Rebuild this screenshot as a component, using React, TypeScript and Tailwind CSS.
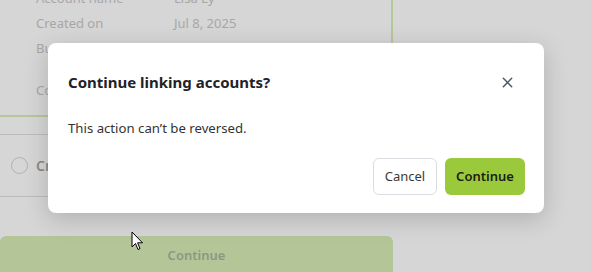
import React from 'react';

const rows = [
  { label: 'Account name', value: 'Lisa Ly' },
  { label: 'Created on', value: 'Jul 8, 2025' },
  { label: 'Business type', value: 'Sole proprietor' },
];

export default function App() {
  return (
    <div className="relative w-[591px] h-[272px] overflow-hidden bg-white font-['Noto_Sans',sans-serif]">
      {/* Page behind the dialog */}
      <div className="w-[393px]">
        <div className="-mt-[22px] -ml-4 border-2 border-[#dbedb7] rounded-b-lg pl-[50px] pt-[6px] pb-[12px]">
          {rows.map((r) => (
            <div key={r.label} className="flex h-[25px] items-center text-[13px] text-[#c8c8c8]">
              <span className="w-[138px]">{r.label}</span>
              <span>{r.value}</span>
            </div>
          ))}
          <div className="flex mt-[17px] h-[25px] items-center text-[13px] text-[#c8c8c8]">
            <span className="w-[138px]">Contact</span>
            <span>lisa@example.com</span>
          </div>
        </div>
        <div className="mt-[17px] border-y border-[#e0e0e0] h-[63px] flex items-center gap-2 pl-[11px]">
          <span className="w-[17px] h-[17px] rounded-full border border-[#d4d4d4]" />
          <span className="text-[14px] font-semibold text-[#a6a6a6]">Create a new account</span>
        </div>
        <div className="mt-[39px] h-[40px] rounded-md bg-[#d7ecb6] flex items-center justify-center text-[13px] font-semibold text-[#a4b79a]">
          Continue
        </div>
      </div>

      {/* Overlay */}
      <div className="absolute inset-0 bg-black/[0.16]" />

      {/* Mouse cursor */}
      <svg className="absolute left-[131px] top-[231px]" width="13" height="20" viewBox="0 0 13 20">
        <path d="M1 1 L1 16 L4.5 12.5 L7 18.5 L9 17.6 L6.6 11.8 L11.5 11.8 Z" fill="white" stroke="black" strokeWidth="1" strokeLinejoin="round" />
      </svg>

      {/* Dialog */}
      <div className="absolute left-[48px] top-[43px] w-[496px] h-[170px] rounded-lg bg-white shadow-[0_6px_24px_rgba(0,0,0,0.18)] pl-5 pr-[19px] pt-[28px] flex flex-col">
        <div className="flex items-center justify-between">
          <h2 className="text-[15px] font-bold text-[#1f2328] leading-[22px]">Continue linking accounts?</h2>
          <button className="mr-[11px] text-[#4b5563]">
            <svg width="13" height="13" viewBox="0 0 14 14" fill="none" stroke="currentColor" strokeWidth="1.6" strokeLinecap="round">
              <path d="M2.5 2.5 L11.5 11.5 M11.5 2.5 L2.5 11.5" />
            </svg>
          </button>
        </div>
        <p className="mt-[26px] text-[13.2px] text-[#333]">This action can’t be reversed.</p>
        <div className="mt-auto mb-[18px] flex justify-end gap-2">
          <button className="h-[37px] w-[64px] rounded-md border border-[#d9dce1] bg-white text-[13px] text-[#3a3a3a]">
            Cancel
          </button>
          <button className="h-[37px] w-[80px] rounded-md bg-[#9aca3c] text-[13px] font-semibold text-[#1a1f14]">
            Continue
          </button>
        </div>
      </div>
    </div>
  );
}
